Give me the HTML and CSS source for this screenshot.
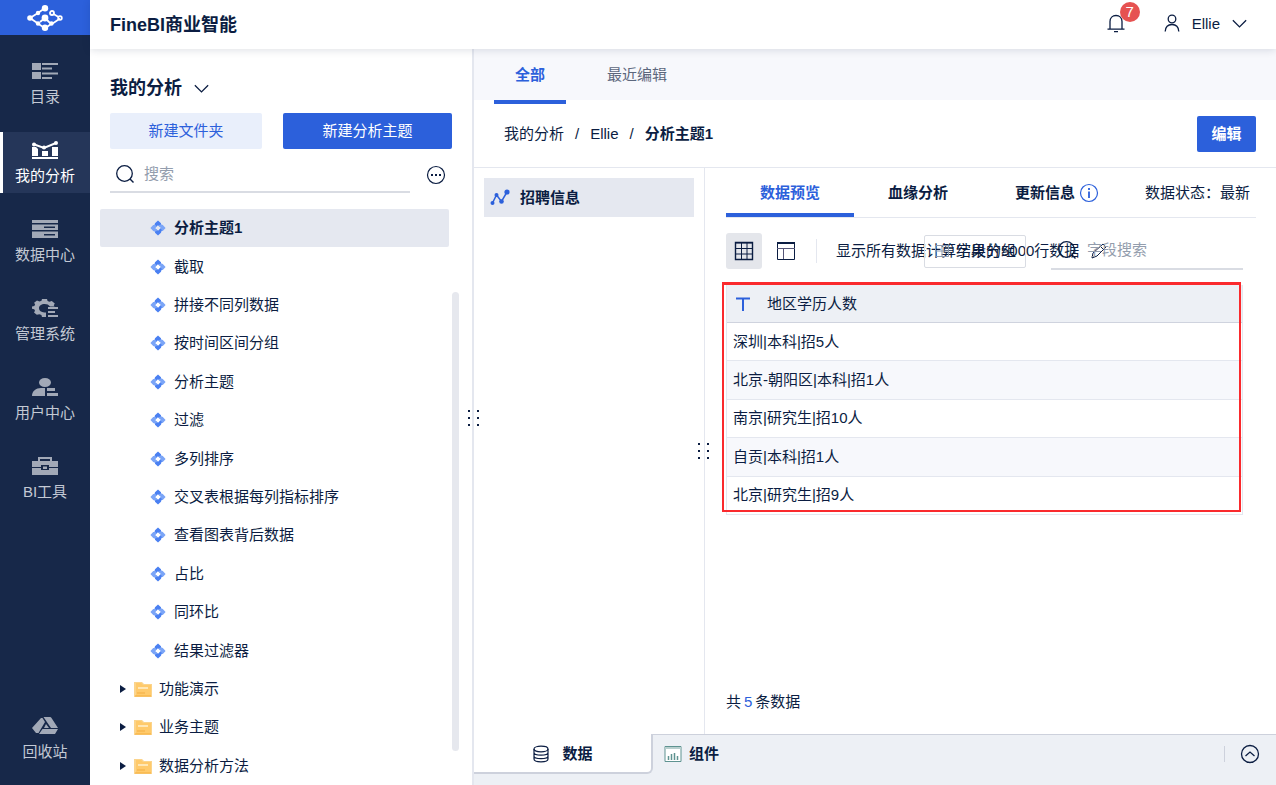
FILE: index.html
```html
<!DOCTYPE html>
<html lang="zh-CN">
<head>
    <meta charset="UTF-8">
    <meta name="viewport" content="width=device-width, initial-scale=1.0">
    <title>FineBI商业智能</title>
    <link rel="stylesheet" href="styles.css">
</head>
<body>
    <!-- Shared icons -->
    <svg class="sprite" aria-hidden="true">
        <symbol id="icon-subject" viewBox="0 0 16 16">
            <path d="M5 3.200 8 .4l3 2.800v2.200L9.400 6.800 8 5.200 5.400 7.400 4.200 6z" fill="#4a80f2"/>
            <path d="M12.800 5 15.600 8l-2.800 3h-2.200L9.200 9.400 10.800 8 8.600 5.400 11 4.200z" fill="#7ba5f7"/>
            <path d="M11 12.800 8 15.600l-3-2.800v-2.200L6.600 9.200 8 10.800 10.600 8.600 11.800 10z" fill="#4a80f2"/>
            <path d="M3.200 11 .4 8l2.800-3h2.200L6.800 6.600 5.200 8l2.200 2.600L5 11.800z" fill="#7ba5f7"/>
        </symbol>
        <symbol id="icon-folder" viewBox="0 0 18 16">
            <path d="M0 1h8l2 2h8v13H0z" fill="#fbd48c"/>
            <path d="M2 2h5l2 2h8v11H2z" fill="#ffca6b"/>
            <path d="M4 7h10" stroke="#fff0cf" stroke-width="1.500"/>
            <path d="M3 12h8" stroke="#f3ad42"/>
            <path d="M1 15h16" stroke="#f5ae3c"/>
        </symbol>
        <symbol id="icon-chevron" viewBox="0 0 14 14">
            <path d="M.8 4 7 10.200 13.200 4" fill="none" stroke="currentColor" stroke-width="1.200"/>
        </symbol>
        <symbol id="icon-search" viewBox="0 0 20 20">
            <circle cx="9.500" cy="9.500" r="7.800" fill="none" stroke="currentColor" stroke-width="1.300"/>
            <path d="m15 15 3.500 3.500" stroke="currentColor" stroke-width="1.400"/>
        </symbol>
    </svg>

    <div class="app">
        <nav class="sidebar">
            <a class="logo" href="#" aria-label="FineBI">
                <svg width="36" height="26" viewBox="0 0 36 26" fill="none" stroke="#fff" stroke-width="1.800">
                    <path d="M18 3 11 8 3 13l8 5.500 7 5 6-4.500M13 17l5-4 4 4 3 2 8-5.500M26.500 9l5 3"/>
                    <g fill="#fff" stroke="none"><circle cx="18" cy="3.200" r="3.200"/><circle cx="3" cy="13" r="2.800"/><circle cx="11" cy="8" r="2.200"/><circle cx="11" cy="18.500" r="2.200"/><circle cx="18" cy="13" r="3.400"/><circle cx="18" cy="22.800" r="3.200"/><circle cx="24.500" cy="18.500" r="2.200"/></g>
                    <circle cx="25" cy="8" r="2"/><circle cx="33" cy="13" r="1.800"/>
                </svg>
            </a>
            <div class="nav-list">
                <a class="nav-item" href="#">
                    <svg class="nav-icon" viewBox="0 0 26 18"><path d="M0 1h9v7H0zM0 10h9v7H0zM10 1h16v2H10zM10 5.500h10v2H10zM10 10.500h16v2H10zM10 15h10v2H10z"/></svg>
                    <span>目录</span>
                </a>
                <a class="nav-item active" href="#">
                    <svg class="nav-icon" viewBox="0 0 26 18"><path d="M0 6h4l2 2v7H0zM10 10h6v5h-6zM20 6h6v9h-6zM0 16h26v2H0z"/><path d="m1 3 11 4 12-5" fill="none" stroke="currentColor" stroke-width="2"/><circle cx="2" cy="3.500" r="2"/><circle cx="12" cy="6.500" r="2"/><circle cx="24" cy="2" r="2"/></svg>
                    <span>我的分析</span>
                </a>
                <a class="nav-item" href="#">
                    <svg class="nav-icon" viewBox="0 0 26 18"><path d="M0 0h26v3H0z"/><path fill-rule="evenodd" d="M0 4.500h26V10H0zM12 6.500v1.500h11V6.500zM0 11.500h26V18H0zM12 14v1.500h11V14z"/></svg>
                    <span>数据中心</span>
                </a>
                <a class="nav-item" href="#">
                    <svg class="nav-icon" viewBox="0 0 26 18"><path d="M10 0h5l.6 2 1.800.8 2.400-.8 3 2.400-1 1.800.8 1.300H18C16.800 5.800 15 5 12.700 5 9.300 5 7 6.800 7 9.200s2.300 4 5.300 4.200H14V18h-4l-.6-2-2-.8-2.600.6L2 13.500l1-1.800-.8-1.400L0 9.800V7.500L2.300 7l.8-1.500-1-1.700L5 1.600l2.500.8 2-.7z"/><path d="M16 8h10v2H16zM16 12h7v2h-7zM16 16h10v2H16z"/></svg>
                    <span>管理系统</span>
                </a>
                <a class="nav-item" href="#">
                    <svg class="nav-icon" viewBox="0 0 26 18"><ellipse cx="13" cy="4.500" rx="6" ry="4.500"/><path d="M0 18c0-5 4-8 9-8h4v8zM15 10h8v3h-8zM15 15h11v3H15z"/></svg>
                    <span>用户中心</span>
                </a>
                <a class="nav-item" href="#">
                    <svg class="nav-icon" viewBox="0 0 26 18"><path fill-rule="evenodd" d="M6 0h14v4h6v6h-9V8H9v2H0V4h6zM8 2v2h10V2zM0 11h9v2h8v-2h9v7H0zM11 9.500h4v2.500h-4z"/></svg>
                    <span>BI工具</span>
                </a>
                <a class="nav-item nav-bottom" href="#">
                    <svg class="nav-icon" viewBox="0 0 26 18"><path d="M9 1h1.500L13 5 6.500 16H4L0 11zM11.500 0H18q1 0 1.500 1L26 11h-7zM10.500 12H26l-3 5H7zM14 7l3 4h-5z"/></svg>
                    <span>回收站</span>
                </a>
            </div>
        </nav>

        <div class="page">
            <header class="header">
                <h1>FineBI商业智能</h1>
                <div class="header-tools">
                    <button class="bell" aria-label="消息">
                        <svg width="18" height="20" viewBox="0 0 18 20" fill="none" stroke="currentColor" stroke-width="1.300"><path d="M3 15V7.500C3 4 5.500 1.500 9 1.500S15 4 15 7.500V15M.5 15.200h17M7 17.700h4"/></svg>
                        <span class="badge">7</span>
                    </button>
                    <button class="user">
                        <svg width="16" height="20" viewBox="0 0 16 20" fill="none" stroke="currentColor" stroke-width="1.300"><circle cx="8" cy="5" r="3.800"/><path d="M1.200 17.500c.3-4.600 3-7 6.800-7s6.500 2.400 6.800 7"/></svg>
                        <span>Ellie</span>
                        <svg width="15" height="15"><use href="#icon-chevron"/></svg>
                    </button>
                </div>
            </header>

            <div class="workspace">
                <!-- Subject tree -->
                <aside class="panel">
                    <button class="panel-title">我的分析 <svg width="15" height="15"><use href="#icon-chevron"/></svg></button>
                    <div class="panel-actions">
                        <button class="btn btn-light">新建文件夹</button>
                        <button class="btn btn-wide">新建分析主题</button>
                    </div>
                    <div class="panel-search">
                        <label class="search">
                            <svg width="20" height="20"><use href="#icon-search"/></svg>
                            <input type="text" placeholder="搜索" aria-label="搜索">
                        </label>
                        <button class="icon-btn" aria-label="更多">
                            <svg width="20" height="20" viewBox="0 0 20 20"><circle cx="10" cy="10" r="8.500" fill="none" stroke="currentColor" stroke-width="1.200"/><path d="M5 9h2v2H5zM9 9h2v2H9zM13 9h2v2h-2z" fill="currentColor"/></svg>
                        </button>
                    </div>
                    <div class="tree-wrap">
                        <ul class="tree">
                            <li class="selected"><svg class="subject"><use href="#icon-subject"/></svg>分析主题1</li>
                            <li><svg class="subject"><use href="#icon-subject"/></svg>截取</li>
                            <li><svg class="subject"><use href="#icon-subject"/></svg>拼接不同列数据</li>
                            <li><svg class="subject"><use href="#icon-subject"/></svg>按时间区间分组</li>
                            <li><svg class="subject"><use href="#icon-subject"/></svg>分析主题</li>
                            <li><svg class="subject"><use href="#icon-subject"/></svg>过滤</li>
                            <li><svg class="subject"><use href="#icon-subject"/></svg>多列排序</li>
                            <li><svg class="subject"><use href="#icon-subject"/></svg>交叉表根据每列指标排序</li>
                            <li><svg class="subject"><use href="#icon-subject"/></svg>查看图表背后数据</li>
                            <li><svg class="subject"><use href="#icon-subject"/></svg>占比</li>
                            <li><svg class="subject"><use href="#icon-subject"/></svg>同环比</li>
                            <li><svg class="subject"><use href="#icon-subject"/></svg>结果过滤器</li>
                            <li class="folder"><i class="caret"></i><svg class="folder-icon"><use href="#icon-folder"/></svg>功能演示</li>
                            <li class="folder"><i class="caret"></i><svg class="folder-icon"><use href="#icon-folder"/></svg>业务主题</li>
                            <li class="folder"><i class="caret"></i><svg class="folder-icon"><use href="#icon-folder"/></svg>数据分析方法</li>
                        </ul>
                        <div class="scrollbar"></div>
                    </div>
                    <div class="drag drag-panel"><i></i><i></i><i></i><i></i><i></i><i></i></div>
                </aside>

                <main class="main">
                    <div class="top-tabs">
                        <button class="top-tab active">全部</button>
                        <button class="top-tab">最近编辑</button>
                    </div>
                    <div class="crumbs">
                        <a href="#">我的分析</a><span>/</span><a href="#">Ellie</a><span>/</span><strong>分析主题1</strong>
                        <button class="btn edit">编辑</button>
                    </div>

                    <div class="content">
                        <section class="tables">
                            <button class="table-item">
                                <svg width="20" height="18" viewBox="0 0 20 18" fill="#2c60db"><path d="m2.500 14 4-8 5 6.500L17 3" fill="none" stroke="#2c60db" stroke-width="1.500"/><circle cx="2.500" cy="14" r="2"/><circle cx="6.500" cy="6" r="2"/><circle cx="11.500" cy="12.500" r="2.300"/><circle cx="17" cy="3" r="2.600"/></svg>
                                招聘信息
                            </button>
                            <div class="drag drag-tables"><i></i><i></i><i></i><i></i><i></i><i></i></div>
                        </section>

                        <section class="preview">
                            <div class="tabs">
                                <button class="tab active">数据预览</button>
                                <button class="tab">血缘分析</button>
                                <button class="tab tab-info">更新信息
                                    <svg width="20" height="20" viewBox="0 0 20 20" fill="none" stroke="#2c60db"><circle cx="10" cy="10" r="8.500" stroke-width="1.200"/><path d="M10 8.500V15M10 5v2" stroke-width="1.800"/></svg>
                                </button>
                                <span class="status">数据状态：最新</span>
                            </div>

                            <div class="toolbar">
                                <button class="tool active" aria-label="表格">
                                    <svg width="20" height="20" viewBox="0 0 20 20" fill="none" stroke="currentColor"><path d="M1.500 1.500h17v17h-17z" stroke-width="1.400"/><path d="M1 2h18M1 7.500h18M1 13h18M7.500 1v18M13 1v18"/></svg>
                                </button>
                                <button class="tool" aria-label="结构">
                                    <svg width="20" height="20" viewBox="0 0 20 20" fill="none" stroke="currentColor"><path d="M1.500 1.500h17v17h-17z"/><path d="M1 2h18" stroke-width="2"/><path d="M1 7.500h18M7.500 7.500V18" stroke="#557"/></svg>
                                </button>
                                <i class="divider"></i>
                                <div class="notice">
                                    <span>显示所有数据计算结果的5000行数据</span>
                                    <svg width="18" height="18" viewBox="0 0 18 18" fill="none" stroke="currentColor"><path d="m2 16 1-5L13 2l3 3L7 14z"/><path d="m10 4 4 4"/></svg>
                                </div>
                                <button class="group-btn">
                                    <svg width="16" height="16" viewBox="0 0 16 16" fill="none" stroke="#8d9bb0"><path d="M1.500 2.500h13v11h-13zM1.500 8h13M8 2.500v11"/></svg>
                                    字段分组
                                </button>
                                <label class="field-search">
                                    <svg width="20" height="20"><use href="#icon-search"/></svg>
                                    <input type="text" placeholder="字段搜索" aria-label="字段搜索">
                                </label>
                            </div>

                            <div class="table-wrap">
                                <table class="data-table">
                                    <thead>
                                        <tr><th><svg width="16" height="16" viewBox="0 0 16 16"><path d="M1 2.500h14M8 2v13" stroke="#2c60db" stroke-width="2"/></svg>地区学历人数</th></tr>
                                    </thead>
                                    <tbody>
                                        <tr><td>深圳|本科|招5人</td></tr>
                                        <tr><td>北京-朝阳区|本科|招1人</td></tr>
                                        <tr><td>南京|研究生|招10人</td></tr>
                                        <tr><td>自贡|本科|招1人</td></tr>
                                        <tr><td>北京|研究生|招9人</td></tr>
                                    </tbody>
                                </table>
                                <div class="marker"></div>
                            </div>

                            <p class="count">共<span>5</span>条数据</p>
                        </section>
                    </div>

                    <footer class="bottom">
                        <button class="sheet active">
                            <svg width="18" height="18" viewBox="0 0 18 18" fill="none" stroke="currentColor" stroke-width="1.200"><ellipse cx="9" cy="4" rx="7" ry="2.800"/><path d="M2 4v10c0 3.700 14 3.700 14 0V4M2 7.500c0 3.500 14 3.500 14 0M2 11c0 3.500 14 3.500 14 0"/></svg>
                            数据
                        </button>
                        <button class="sheet">
                            <svg width="18" height="18" viewBox="0 0 18 18"><path d="M1 1.500h16v15H1z" fill="#fff" stroke="#5f9391"/><path d="M1 2h16v2H1z" fill="#b8cfce"/><path d="M4.500 11v4M7.500 9v6M10.500 8v7M13.500 11v4" stroke="#5f9391" stroke-width="1.500"/></svg>
                            组件
                        </button>
                        <div class="bottom-right">
                            <button class="icon-btn" aria-label="展开">
                                <svg width="20" height="20" viewBox="0 0 20 20" fill="none" stroke="currentColor" stroke-width="1.300"><circle cx="10" cy="10" r="8.500"/><path d="m5.500 12 4.500-4 4.500 4"/></svg>
                            </button>
                        </div>
                    </footer>
                </main>
            </div>
        </div>
    </div>
</body>
</html>
```
FILE: styles.css
```css
:root {
    --primary: #2c60db;
    --navy: #172849;
    --text: #0b1d42;
    --muted: #939dad;
    --line: #e4e7ef;
    --selected: #e5e8f0;
    --bar: #edf0f5;
    --stripe: #f7f8fc;
}

* {
    box-sizing: border-box;
}

body {
    margin: 0;
    font-family: "Liberation Sans", "Noto Sans CJK SC", sans-serif;
    font-size: 15px;
    line-height: 20px;
    color: var(--text);
    background: #fff;
}

button, input {
    font: inherit;
    color: inherit;
    border: none;
    background: none;
    padding: 0;
    margin: 0;
}

button {
    display: flex;
    align-items: center;
    justify-content: center;
    cursor: pointer;
    white-space: nowrap;
}

input {
    width: 100%;
    min-width: 0;
    outline: none;
}

input::placeholder {
    color: var(--muted);
    opacity: 1;
}

a {
    color: inherit;
    text-decoration: none;
}

svg {
    flex: none;
}

.sprite {
    position: absolute;
    width: 0;
    height: 0;
}

.app {
    display: flex;
    height: 100vh;
}

/* Sidebar */
.sidebar {
    display: flex;
    flex-direction: column;
    width: 90px;
    flex: none;
    background: var(--navy);
}

.logo {
    display: flex;
    align-items: center;
    justify-content: center;
    height: 35px;
    background: var(--primary);
}

.nav-list {
    display: flex;
    flex-direction: column;
    flex: 1;
    gap: 18px;
    padding: 18px 0 16px;
}

.nav-item {
    display: flex;
    flex-direction: column;
    align-items: center;
    gap: 7px;
    height: 61px;
    padding-top: 9px;
    color: #c3c9d4;
}

.nav-icon {
    width: 26px;
    height: 18px;
    fill: currentColor;
    color: #a2a9b7;
}

.nav-item.active {
    color: #fff;
    background: #253659;
    box-shadow: inset 3px 0 #fff;
}

.nav-item.active .nav-icon {
    color: #fff;
}

.nav-bottom {
    margin-top: auto;
}

/* Header */
.page {
    display: flex;
    flex-direction: column;
    flex: 1;
    min-width: 0;
}

.header {
    display: flex;
    align-items: center;
    justify-content: space-between;
    flex: none;
    height: 49px;
    padding: 0 29px 0 20px;
    background: #fff;
    box-shadow: 0 1px 8px rgba(11, 29, 66, 0.14);
    position: relative;
    z-index: 2;
}

h1 {
    margin: 0;
    font-size: 18px;
    line-height: 24px;
}

.header-tools {
    display: flex;
    gap: 39px;
    padding-bottom: 2px;
}

.bell {
    position: relative;
}

.badge {
    position: absolute;
    top: -12px;
    left: 13px;
    width: 20px;
    height: 20px;
    border-radius: 10px;
    background: #e65251;
    color: #fff;
}

.user {
    gap: 12px;
}

/* Left panel */
.workspace {
    display: flex;
    flex: 1;
    min-height: 0;
}

.panel {
    display: flex;
    flex-direction: column;
    align-items: stretch;
    flex: none;
    width: 384px;
    padding: 27px 13px 0 10px;
    border-right: 2px solid var(--line);
    position: relative;
}

.panel-title {
    align-self: flex-start;
    gap: 12px;
    padding-left: 10px;
    font-size: 18px;
    line-height: 24px;
    font-weight: bold;
}

.panel-actions {
    display: flex;
    gap: 21px;
    margin: 13px 7px 0 10px;
}

.btn {
    height: 36px;
    border-radius: 2px;
    background: var(--primary);
    color: #fff;
}

.btn-light {
    flex: 9;
    background: #e9effb;
    color: var(--primary);
}

.btn-wide {
    flex: 10;
}

.panel-search {
    display: flex;
    align-items: center;
    gap: 16px;
    margin: 8px 13px 0 10px;
}

.search {
    display: flex;
    flex: 1;
    align-items: center;
    gap: 9px;
    height: 36px;
    padding-left: 5px;
    border-bottom: 2px solid #d9dce3;
}

.tree-wrap {
    display: flex;
    flex: 1;
    gap: 3px;
    min-height: 0;
    margin-top: 16px;
}

.tree {
    display: flex;
    flex-direction: column;
    flex: 1;
    margin: 0;
    padding: 0;
    list-style: none;
}

.tree li {
    display: flex;
    flex: 1;
    align-items: center;
    gap: 8px;
    padding-left: 50px;
}

.tree .selected {
    border-radius: 2px;
    background: var(--selected);
    font-weight: bold;
}

.tree .folder {
    padding-left: 20px;
}

.subject {
    width: 16px;
    height: 16px;
}

.folder-icon {
    width: 18px;
    height: 16px;
    margin-right: -1px;
}

.caret {
    border-left: 6px solid var(--text);
    border-top: 4px solid transparent;
    border-bottom: 4px solid transparent;
}

.scrollbar {
    width: 7px;
    margin: 83px 0 34px;
    border-radius: 4px;
    background: #e6e8ee;
}

.drag {
    position: absolute;
    display: grid;
    grid-template-columns: 2px 2px;
    gap: 5px 7px;
}

.drag i {
    height: 2px;
    background: var(--text);
}

.drag-panel {
    right: -7px;
    top: 361px;
}

.drag-tables {
    right: -5px;
    top: 50%;
    transform: translateY(-50%);
}

/* Main area */
.main {
    display: flex;
    flex-direction: column;
    flex: 1;
    min-width: 0;
}

.top-tabs {
    display: flex;
    flex: none;
    gap: 20px;
    height: 51px;
    padding-left: 20px;
    background: var(--stripe);
}

.top-tab {
    height: 55px;
    padding: 0 21px 4px;
    color: #5c677d;
}

.top-tab.active {
    border-bottom: 4px solid var(--primary);
    padding-bottom: 0;
    color: var(--primary);
    font-weight: bold;
}

.crumbs {
    display: flex;
    align-items: center;
    flex: none;
    gap: 11px;
    height: 68px;
    padding: 0 20px 0 30px;
    border-bottom: 1px solid var(--line);
}

.edit {
    width: 59px;
    margin-left: auto;
    font-weight: bold;
}

.content {
    display: flex;
    flex: 1;
    min-height: 0;
}

.tables {
    flex: none;
    width: 231px;
    padding: 10px;
    border-right: 1px solid var(--line);
    position: relative;
}

.table-item {
    justify-content: flex-start;
    gap: 10px;
    width: 100%;
    height: 39px;
    padding-left: 6px;
    background: var(--selected);
    font-weight: bold;
}

.preview {
    display: flex;
    flex-direction: column;
    flex: 1;
    min-width: 0;
    padding: 0 20px 0 21px;
}

.tabs {
    display: flex;
    align-items: stretch;
    height: 50px;
    border-bottom: 1px solid var(--line);
}

.tab {
    flex: none;
    width: 128px;
    font-weight: bold;
}

.tab.active {
    color: var(--primary);
    border-bottom: 4px solid var(--primary);
    padding-top: 4px;
}

.tab-info {
    gap: 4px;
    width: 150px;
}

.status {
    align-self: center;
    margin-left: auto;
    padding-right: 6px;
}

.toolbar {
    display: flex;
    align-items: center;
    height: 36px;
    margin: 15px 13px 0 0;
}

.tool {
    flex: none;
    width: 36px;
    height: 36px;
    margin-right: 6px;
    border-radius: 3px;
}

.tool.active {
    background: #e4e6eb;
}

.divider {
    width: 1px;
    height: 24px;
    margin: 0 19px 0 6px;
    background: var(--line);
}

/* The long notice runs on under the button and the search box */
.notice {
    display: flex;
    flex: 1;
    align-items: center;
    gap: 11px;
    min-width: 0;
    white-space: nowrap;
}

.group-btn {
    flex: none;
    gap: 6px;
    width: 102px;
    height: 33px;
    border: 1px solid #d9dce3;
    border-radius: 2px;
}

.field-search {
    display: flex;
    flex: none;
    align-items: center;
    gap: 10px;
    width: 192px;
    height: 38px;
    margin-left: 25px;
    padding-left: 6px;
    border-bottom: 2px solid #d9dce3;
}

.table-wrap {
    position: relative;
    margin: 16px 13px 0 0;
}

.data-table {
    width: 100%;
    height: 230px;
    border-collapse: separate;
    border-spacing: 0;
    border: 1px solid var(--line);
    border-width: 0 1px;
}

.data-table th, .data-table td {
    height: 38px;
    padding: 0 6px;
    border-bottom: 1px solid var(--line);
    text-align: left;
    font-weight: normal;
}

.data-table th {
    padding-left: 8px;
    background: var(--bar);
    border-color: #cfd3de;
}

.data-table th svg {
    margin-right: 16px;
    vertical-align: -3px;
}

.data-table tbody tr:nth-child(even) {
    background: var(--stripe);
}

/* Red frame drawn over the table */
.marker {
    position: absolute;
    top: -3px;
    left: -4px;
    right: 2px;
    bottom: 3px;
    border: 2px solid #fa2a2d;
    border-top-width: 3px;
}

.count {
    margin: auto 0 22px;
}

.count span {
    margin: 0 3px;
    color: var(--primary);
}

/* Bottom bar */
.bottom {
    display: flex;
    flex: none;
    height: 51px;
    background: var(--bar);
    box-shadow: inset 0 1px #cdd1dc;
}

.sheet {
    gap: 7px;
    height: 40px;
    padding-left: 11px;
    font-weight: bold;
}

.sheet.active {
    gap: 12px;
    width: 179px;
    padding: 2px 0 0;
    background: #fff;
    border: solid #cdd1dc;
    border-width: 0 2px 2px 0;
    border-bottom-right-radius: 6px;
}

.bottom-right {
    display: flex;
    align-items: center;
    height: 16px;
    margin: 12px 16px 0 auto;
    padding-left: 15px;
    border-left: 1px solid #cdd1dc;
}
```
